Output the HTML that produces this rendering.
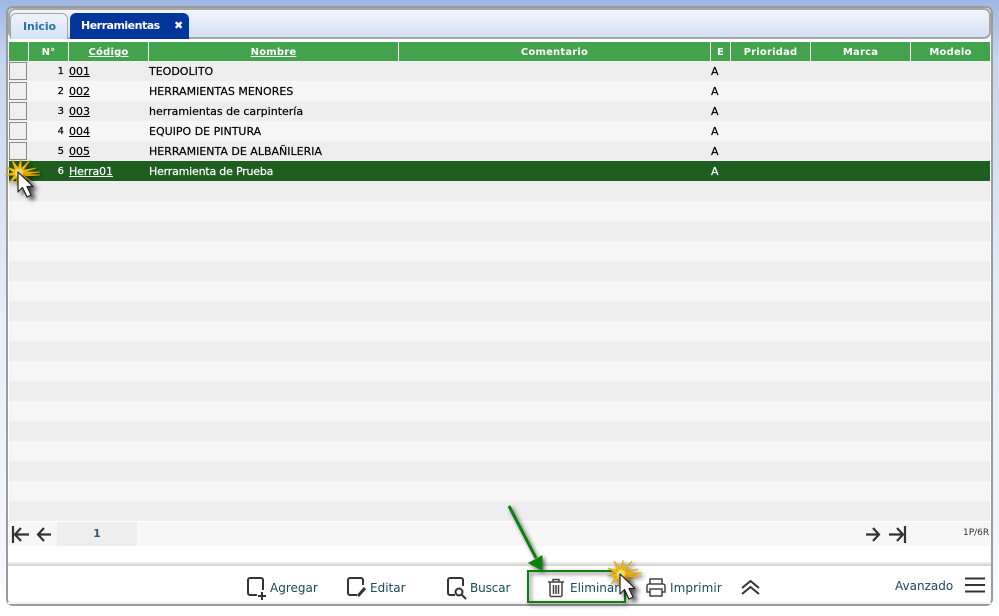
<!DOCTYPE html>
<html><head><meta charset="utf-8"><style>
*{box-sizing:border-box}
html,body{margin:0;padding:0}
body{width:999px;height:616px;position:relative;overflow:hidden;background:linear-gradient(#9fb7e3 0,#c6d5ef 60px,#e6edf8 300px,#f4f7fc 560px,#fff 610px);font-family:"DejaVu Sans",sans-serif;font-size:11px;color:#000}
div,span,a{position:absolute;white-space:nowrap}
a{color:inherit;text-decoration:underline}
#frame{left:6px;top:6px;width:987px;height:600px;background:#fff;border:2px solid #9b9b9b;border-radius:7px}
#tabbar{left:8px;top:8px;width:983px;height:31px;background:linear-gradient(#f1f5fc,#d3e0f2);border:2px solid #a6a6a6;border-radius:7px}
.tab{top:13px;height:26px;border-radius:6px 6px 0 0;font-weight:bold;font-size:11px;line-height:25px;text-align:left}
.h{top:42px;height:19px;background:#43a24c;color:#fff;font-weight:bold;font-size:10px;letter-spacing:.2px;line-height:21px;text-align:center}
.r{left:9px;width:981px;height:20px}
.c{top:1px;line-height:20px;height:20px;-webkit-text-stroke:.2px currentColor}
.n{left:0;width:55px;text-align:right;font-size:10px}
.cb{left:9px;width:18px;height:18px;background:#f0f0f0;border:1px solid #8c8c8c}
.lbl{font-size:12px;color:#1a4a5a;line-height:16px}
</style></head><body>
<div id="frame"></div>
<div id="tabbar"></div>
<div class="tab" style="left:10px;width:58px;background:linear-gradient(#eef3fb,#d6e2f3);border:1px solid #a6a6a6;border-bottom:0;color:#2d73ad;padding-left:12px;letter-spacing:-.1px">Inicio</div>
<div class="tab" style="left:70px;width:119px;background:#02369b;color:#fff;padding-left:11px;letter-spacing:-.5px">Herramientas<span style="left:104px;top:0;font-size:11px;letter-spacing:0">✖</span></div>

<div class="h" style="left:9px;width:19px"></div>
<div class="h" style="left:29px;width:39px">N°</div>
<div class="h" style="left:69px;width:79px"><a href="#" style="position:static">Código</a></div>
<div class="h" style="left:149px;width:249px"><a href="#" style="position:static">Nombre</a></div>
<div class="h" style="left:399px;width:311px">Comentario</div>
<div class="h" style="left:711px;width:19px">E</div>
<div class="h" style="left:731px;width:79px">Prioridad</div>
<div class="h" style="left:811px;width:99px">Marca</div>
<div class="h" style="left:911px;width:79px">Modelo</div>

<div class="r" style="top:61px;background:#eeeeee"><span class="c n">1</span><a href="#" class="c" style="left:60px">001</a><span class="c" style="left:140px">TEODOLITO</span><span class="c" style="left:702px">A</span></div>
<div class="r" style="top:81px;background:#f6f6f6"><span class="c n">2</span><a href="#" class="c" style="left:60px">002</a><span class="c" style="left:140px">HERRAMIENTAS MENORES</span><span class="c" style="left:702px">A</span></div>
<div class="r" style="top:101px;background:#eeeeee"><span class="c n">3</span><a href="#" class="c" style="left:60px">003</a><span class="c" style="left:140px">herramientas de carpintería</span><span class="c" style="left:702px">A</span></div>
<div class="r" style="top:121px;background:#f6f6f6"><span class="c n">4</span><a href="#" class="c" style="left:60px">004</a><span class="c" style="left:140px">EQUIPO DE PINTURA</span><span class="c" style="left:702px">A</span></div>
<div class="r" style="top:141px;background:#eeeeee"><span class="c n">5</span><a href="#" class="c" style="left:60px">005</a><span class="c" style="left:140px">HERRAMIENTA DE ALBAÑILERIA</span><span class="c" style="left:702px">A</span></div>
<div class="r" style="top:161px;background:#1e5e20;color:#fff"><span class="c n">6</span><a href="#" class="c" style="left:60px;letter-spacing:-.1px">Herra01</a><span class="c" style="left:140px;letter-spacing:-.2px">Herramienta de Prueba</span><span class="c" style="left:702px">A</span></div>

<div class="r" style="top:181px;background:#eeeeee"></div><div class="r" style="top:201px;background:#f6f6f6"></div>
<div class="r" style="top:221px;background:#eeeeee"></div><div class="r" style="top:241px;background:#f6f6f6"></div>
<div class="r" style="top:261px;background:#eeeeee"></div><div class="r" style="top:281px;background:#f6f6f6"></div>
<div class="r" style="top:301px;background:#eeeeee"></div><div class="r" style="top:321px;background:#f6f6f6"></div>
<div class="r" style="top:341px;background:#eeeeee"></div><div class="r" style="top:361px;background:#f6f6f6"></div>
<div class="r" style="top:381px;background:#eeeeee"></div><div class="r" style="top:401px;background:#f6f6f6"></div>
<div class="r" style="top:421px;background:#eeeeee"></div><div class="r" style="top:441px;background:#f6f6f6"></div>
<div class="r" style="top:461px;background:#eeeeee"></div><div class="r" style="top:481px;background:#f6f6f6"></div>
<div class="r" style="top:501px;background:#eeeeee"></div>

<div class="cb" style="top:62px"></div><div class="cb" style="top:82px"></div><div class="cb" style="top:102px"></div><div class="cb" style="top:122px"></div><div class="cb" style="top:142px"></div>

<div style="left:9px;top:522px;width:981px;height:24px;background:#f7f7f7"></div>
<div style="left:57px;top:522px;width:80px;height:24px;background:#eeeeee;text-align:center;line-height:24px;font-size:11px;font-weight:bold;color:#33566e">1</div>
<div style="left:963px;top:527px;font-size:9px;color:#333;line-height:13px">1P/6R</div>
<div style="left:8px;top:562px;width:983px;height:4px;background:linear-gradient(#f2f2f2,#cfcfcf)"></div>
<div style="left:8px;top:602px;width:983px;height:2px;background:#f0f0f0"></div>

<span class="lbl" style="left:270px;top:580px">Agregar</span>
<span class="lbl" style="left:370px;top:580px">Editar</span>
<span class="lbl" style="left:470px;top:580px;letter-spacing:-.1px">Buscar</span>
<span class="lbl" style="left:570px;top:580px">Eliminar</span>
<span class="lbl" style="left:670px;top:580px;letter-spacing:.1px">Imprimir</span>
<span class="lbl" style="left:895px;top:578px">Avanzado</span>

<svg width="999" height="616" style="position:absolute;left:0;top:0" fill="none" stroke="#333" stroke-width="2">
<defs>
<filter id="s" x="-50%" y="-50%" width="200%" height="200%"><feDropShadow dx="2" dy="2" stdDeviation="2" flood-color="#000" flood-opacity=".6"/></filter>
<filter id="s2" x="-60%" y="-60%" width="220%" height="220%"><feDropShadow dx="4" dy="3" stdDeviation="2.500" flood-color="#000" flood-opacity=".7"/></filter>
<g id="star"><polygon points="21,-1 5,1.300 21,2 5,3 12,8 3.400,4 5,13 .7,5 -2,13 -2.200,4.400 -10,10 -4.400,2.200 -14,2 -5,-.5 -13,-6 -3.700,-3.300 -7,-13 -.8,-5 2,-14 2.300,-4.400 11,-13 4.100,-2.700 17,-5 5,-.8" fill="#f2bd12" stroke="#e3a506" stroke-width=".8"/><circle r="4" fill="#e9df7a" stroke="none"/></g>
<path id="cur" d="M0 0V20L4.500 15.500L9 25L13 23L9 14.500H15Z" fill="#fff" stroke="#222" stroke-width="1.200" stroke-linejoin="round"/>
</defs>
<!-- pagination -->
<g stroke-width="2.200"><path d="M13 526V543M29 534.500H15M21 528l-6 6.500 6 6.500"/><path d="M51 534.500H38M44 528l-6 6.500 6 6.500"/><path d="M866 534.500H879M873 528l6 6.500-6 6.500"/><path d="M889 534.500H903M897 528l6 6.500-6 6.500M905 526V543"/></g>
<!-- agregar -->
<path d="M257 595H250a2 2 0 0 1-2-2V580a2 2 0 0 1 2-2H261a2 2 0 0 1 2 2V590"/><path d="M258 596H266M262 592V600"/>
<!-- editar -->
<path d="M357 595H350a2 2 0 0 1-2-2V580a2 2 0 0 1 2-2H361a2 2 0 0 1 2 2V585"/><path d="M358 596L365 588" stroke-width="3"/>
<!-- buscar -->
<path d="M455 595H450a2 2 0 0 1-2-2V580a2 2 0 0 1 2-2H461a2 2 0 0 1 2 2V586"/><circle cx="459" cy="592" r="3.500"/><path d="M462 595L466 599"/>
<!-- trash -->
<g stroke-width="1.500" stroke="#444"><path d="M548 582H564M553 582V579.500H559V582M550 582V595a1.500 1.500 0 0 0 1.500 1.500H560.500a1.500 1.500 0 0 0 1.500-1.500V582M553.500 585V594M556 585V594M558.500 585V594"/>
<!-- printer -->
<path d="M650 584V579H662V584M650 592H647V586a2 2 0 0 1 2-2H663a2 2 0 0 1 2 2V592H662M650 589H662V596H650Z"/></g>
<!-- chevrons -->
<path d="M742 588L750.500 581L759 588M742 594L750.500 587L759 594" stroke-width="2"/>
<!-- hamburger -->
<path d="M965 578.500H985M965 585H985M965 591.500H985" stroke-width="2"/>
<!-- green box + arrow -->
<g filter="url(#s)"><rect x="528" y="571" width="97" height="31" stroke="#0c7f10" stroke-width="2"/>
<path d="M509 506L536 558" stroke="#0c7f10" stroke-width="3"/><path d="M529 563L542 556L542 570Z" fill="#0c7f10" stroke="#0c7f10" stroke-width="1"/></g>
<!-- star + cursor 1 -->
<use href="#star" transform="translate(19,173)" filter="url(#s)"/>
<use href="#cur" transform="translate(18,172)" filter="url(#s2)"/>
<!-- star + cursor 2 -->
<use href="#star" transform="translate(621,574)" filter="url(#s)"/>
<use href="#cur" transform="translate(620,574)" filter="url(#s2)"/>
</svg>
</body></html>
